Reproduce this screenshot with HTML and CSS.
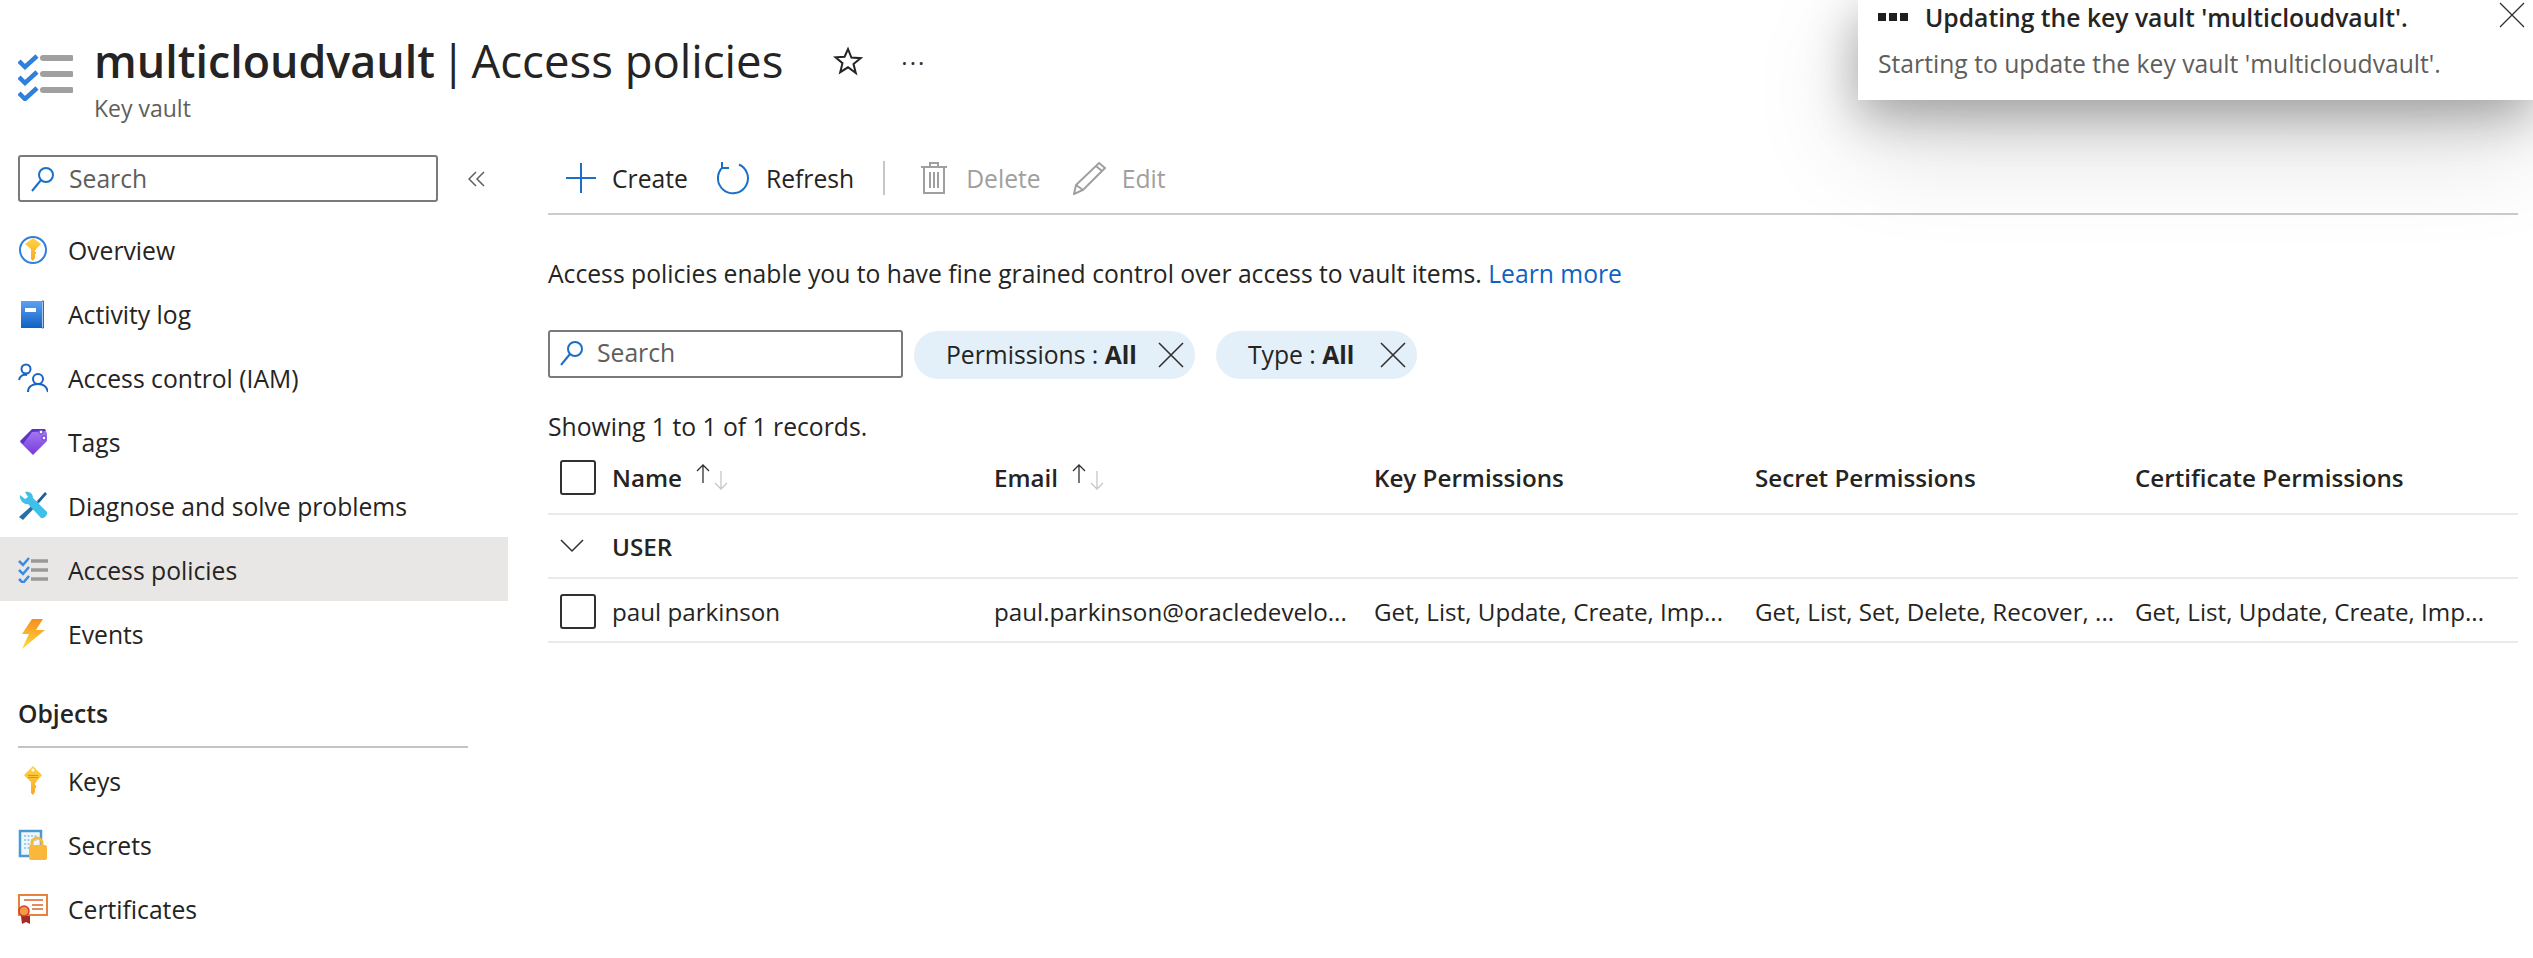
FILE: index.html
```html
<!DOCTYPE html>
<html lang="en">
<head>
	<meta charset="UTF-8">
	<title>multicloudvault | Access policies</title>
	<link rel="stylesheet" href="styles.css">
</head>
<body>
	<svg class="defs" width="0" height="0">
		<defs>
			<linearGradient id="blue" x1="0" y1="0" x2="0" y2="1"><stop offset="0" stop-color="#5ea0ef"/><stop offset="1" stop-color="#0f62c4"/></linearGradient>
			<linearGradient id="gold" x1="0" y1="0" x2="0" y2="1"><stop offset="0" stop-color="#fed342"/><stop offset="1" stop-color="#f9a825"/></linearGradient>
			<linearGradient id="purple" x1="0" y1="0" x2="0" y2="1"><stop offset="0" stop-color="#a67af4"/><stop offset="1" stop-color="#773adc"/></linearGradient>
			<linearGradient id="bolt" x1="0" y1="0" x2="0" y2="1"><stop offset="0" stop-color="#f78d1e"/><stop offset="1" stop-color="#fedc3d"/></linearGradient>
		</defs>
	</svg>

	<div class="head">
		<svg class="head-icon" width="55" height="48" viewBox="0 0 55 48">
			<path d="M1 8l6 6L19 3M1 24l6 6L19 19M1 40l6 6L19 35" fill="none" stroke="#2f7fdc" stroke-width="4.5"/>
			<path d="M25 5h28M25 21h28M25 37h28" fill="none" stroke="#a0a0a0" stroke-width="6" stroke-linecap="round"/>
		</svg>
		<div class="head-text">
			<h1 class="title"><b>multicloudvault</b><span class="title-bar"> | </span>Access policies</h1>
			<div class="subtitle">Key vault</div>
		</div>
		<svg class="star" width="30" height="30" viewBox="0 0 30 30">
			<path d="M15 3l3.4 8.6 9.1.6-7 5.9 2.3 9L15 21.300l-7.800 4.900 2.300-9-7-5.900 9.100-.6z" fill="none" stroke="#252423" stroke-width="2"/>
		</svg>
		<div class="more">···</div>
	</div>

	<div class="layout">
		<div class="side">
			<div class="side-top">
				<div class="search side-search">
					<svg width="24" height="26" viewBox="0 0 24 26"><circle cx="15" cy="9" r="7" fill="none" stroke="#1a6fc9" stroke-width="2"/><path d="M10 14L1 25" stroke="#1a6fc9" stroke-width="2"/></svg>
					<span>Search</span>
				</div>
				<svg class="collapse" width="18" height="16" viewBox="0 0 18 16"><path d="M8 1L1 8l7 7M16 1L9 8l7 7" fill="none" stroke="#605e5c" stroke-width="1.500"/></svg>
			</div>

			<ul class="nav">
				<li class="nav-item">
					<svg width="30" height="30" viewBox="0 0 30 30"><circle cx="15" cy="15" r="13" fill="#fff" stroke="#2f7fdc" stroke-width="2"/><path d="M15 3l8 6-5 5v1h-1v2h1v2h-1v4l-2 3-2-2V14L7 9z" fill="url(#gold)"/></svg>
					<span>Overview</span>
				</li>
				<li class="nav-item">
					<svg width="30" height="30" viewBox="0 0 30 30"><path d="M3 2h21v27H3z" fill="url(#blue)"/><path d="M24 2h1.500v27H24" fill="#a9c9ee" stroke="#1f6cc5"/><path d="M7 9h11v4H7z" fill="#fff"/></svg>
					<span>Activity log</span>
				</li>
				<li class="nav-item">
					<svg width="30" height="30" viewBox="0 0 30 30" fill="none" stroke="#1a63c6" stroke-width="2"><circle cx="8" cy="6" r="4.500"/><circle cx="20" cy="16" r="5"/><path d="M1 17c1-4 4-6 8-5M10 29c0-5 4-8 10-8s9 3 10 8"/></svg>
					<span>Access control (IAM)</span>
				</li>
				<li class="nav-item">
					<svg width="30" height="30" viewBox="0 0 30 30"><path d="M2 15L14 3h13l2 3v8L15 28z" fill="url(#purple)"/><path d="M2 14L14 2h13l1 2-14 1-9 12z" fill="#5b34c8"/><circle cx="23" cy="5" r="2" fill="#fff" stroke="#5b34c8"/><circle cx="26" cy="11" r="2" fill="#fff" stroke="#5b34c8"/></svg>
					<span>Tags</span>
				</li>
				<li class="nav-item">
					<svg width="30" height="30" viewBox="0 0 30 30"><path d="M27 1l2 2-8 9-2-2z" fill="#1d5f96"/><path d="M19 10l2 2L5 29l-4-3z" fill="#276fa8"/><path d="M2 4l5 4 3-2-3-5c4-1 8 1 8 6l14 14c1 3-3 7-6 6L10 13C6 14 1 9 2 4z" fill="#3fc0e8"/></svg>
					<span>Diagnose and solve problems</span>
				</li>
				<li class="nav-item active">
					<svg width="30" height="26" viewBox="0 0 30 26"><path d="M1 4l4 4 6-7M1 13l4 4 6-7M1 22l4 4 6-7" fill="none" stroke="#3b8ae4" stroke-width="2.500"/><path d="M13 4h17M13 13h17M13 22h17" stroke="#999" stroke-width="3.500"/></svg>
					<span>Access policies</span>
				</li>
				<li class="nav-item">
					<svg width="30" height="32" viewBox="0 0 30 32"><path d="M14 1h11l-7 11h9L4 31l7-15H4z" fill="url(#bolt)"/></svg>
					<span>Events</span>
				</li>
			</ul>

			<div class="group">Objects</div>

			<ul class="nav">
				<li class="nav-item">
					<svg width="30" height="30" viewBox="0 0 30 30"><path d="M15 0l9 9-6 7v1h-1v2h1v3h-1v4l-2 3-2-2V16L6 9z" fill="url(#gold)"/><circle cx="15" cy="4" r="1.500" fill="#fff"/><path d="M10 9.500h10M10 11.500h10" stroke="#e9892c"/></svg>
					<span>Keys</span>
				</li>
				<li class="nav-item">
					<svg width="30" height="32" viewBox="0 0 30 32"><path d="M2 2h21v25H2z" fill="#f0f7fc" stroke="#4a9ad2" stroke-width="2.500"/><path d="M6 7h13M6 11h13M6 15h9M6 19h7" stroke="#9fd0ee" stroke-width="2" stroke-dasharray="2 1.500"/><path d="M14 17v-3a5 5 0 0 1 10 0v3" fill="none" stroke="#fab83b" stroke-width="3"/><rect x="11" y="16" width="18" height="15" rx="2" fill="#fab83b"/></svg>
					<span>Secrets</span>
				</li>
				<li class="nav-item">
					<svg width="30" height="30" viewBox="0 0 30 30"><path d="M1 1h28v20H1z" fill="#fff" stroke="#e8823a" stroke-width="2"/><path d="M6 6h19M14 11h11M14 15h11" stroke="#d9662a" stroke-width="1.500"/><path d="M3 22h9v8l-4-2-4 2z" fill="#a52a22"/><circle cx="6" cy="17" r="5" fill="#f59b45" stroke="#cf3f30" stroke-width="1.500"/></svg>
					<span>Certificates</span>
				</li>
			</ul>
		</div>

		<div class="main">
			<div class="toolbar">
				<div class="tool tool-create">
					<svg width="32" height="30" viewBox="0 0 32 30"><path d="M16 0v30M1 15h30" stroke="#1a6fc9" stroke-width="2"/></svg>
					<span>Create</span>
				</div>
				<div class="tool tool-refresh">
					<svg width="34" height="34" viewBox="0 0 34 34" fill="none" stroke="#1a6fc9" stroke-width="2"><path d="M22 3.500A15 15 0 1 1 6 6"/><path d="M5 1v6h7"/></svg>
					<span>Refresh</span>
				</div>
				<div class="tool-sep"></div>
				<div class="tool tool-delete off">
					<svg width="26" height="32" viewBox="0 0 26 32" fill="none" stroke="#a19f9d" stroke-width="2"><path d="M0 5h26M9 5V1h8v4M3 5v26h20V5M9 10v16M13 10v16M17 10v16"/></svg>
					<span>Delete</span>
				</div>
				<div class="tool tool-edit off">
					<svg width="34" height="34" viewBox="0 0 34 34" fill="none" stroke="#a19f9d" stroke-width="2"><path d="M26 2l6 5L10 29l-9 4 2-9zM3 24l7 5M23 5l6 5"/></svg>
					<span>Edit</span>
				</div>
			</div>

			<p class="intro">Access policies enable you to have fine grained control over access to vault items. <a class="link" href="#qq">Learn more</a></p>

			<div class="filters">
				<div class="search main-search">
					<svg width="24" height="26" viewBox="0 0 24 26"><circle cx="15" cy="9" r="7" fill="none" stroke="#1a6fc9" stroke-width="2"/><path d="M10 14L1 25" stroke="#1a6fc9" stroke-width="2"/></svg>
					<span>Search</span>
				</div>
				<div class="pill pill-perm">
					<span>Permissions : <b>All</b></span>
					<svg width="26" height="26" viewBox="0 0 26 26"><path d="M1 1l24 24M25 1L1 25" stroke="#323130" stroke-width="1.600"/></svg>
				</div>
				<div class="pill pill-type">
					<span>Type : <b>All</b></span>
					<svg width="26" height="26" viewBox="0 0 26 26"><path d="M1 1l24 24M25 1L1 25" stroke="#323130" stroke-width="1.600"/></svg>
				</div>
			</div>

			<div class="count">Showing 1 to 1 of 1 records.</div>

			<div class="row row-head">
				<div class="cell-check"><i class="check"></i></div>
				<div class="cell">Name
					<svg class="sort" width="36" height="26" viewBox="0 0 36 26" fill="none"><path d="M9 19V1M3 7l6-6 6 6" stroke="#323130" stroke-width="1.300"/><path d="M27 7v18M21 19l6 6 6-6" stroke="#c8c6c4" stroke-width="1.300"/></svg>
				</div>
				<div class="cell">Email
					<svg class="sort" width="36" height="26" viewBox="0 0 36 26" fill="none"><path d="M9 19V1M3 7l6-6 6 6" stroke="#323130" stroke-width="1.300"/><path d="M27 7v18M21 19l6 6 6-6" stroke="#c8c6c4" stroke-width="1.300"/></svg>
				</div>
				<div class="cell">Key Permissions</div>
				<div class="cell">Secret Permissions</div>
				<div class="cell">Certificate Permissions</div>
			</div>
			<div class="row row-group">
				<div class="cell-check">
					<svg width="24" height="14" viewBox="0 0 24 14"><path d="M1 1l11 11L23 1" fill="none" stroke="#323130" stroke-width="1.500"/></svg>
				</div>
				<div class="cell">USER</div>
			</div>
			<div class="row row-data">
				<div class="cell-check"><i class="check"></i></div>
				<div class="cell">paul parkinson</div>
				<div class="cell">paul.parkinson@oracledevelo...</div>
				<div class="cell">Get, List, Update, Create, Imp...</div>
				<div class="cell">Get, List, Set, Delete, Recover, ...</div>
				<div class="cell">Get, List, Update, Create, Imp...</div>
			</div>
		</div>
	</div>

	<div class="toast">
		<div class="toast-title">
			<span class="dots"><i></i><i></i><i></i></span>
			<b>Updating the key vault 'multicloudvault'.</b>
		</div>
		<div class="toast-text">Starting to update the key vault 'multicloudvault'.</div>
		<svg class="toast-close" width="26" height="26" viewBox="0 0 26 26"><path d="M1 1l24 24M25 1L1 25" stroke="#323130" stroke-width="1.300"/></svg>
	</div>
</body>
</html>
```

FILE: styles.css
```css
*{
	margin: 0;
	padding: 0;
	list-style-type: none;
	box-sizing: border-box;
}
html,body{
	height: 958px;
	overflow: hidden;
}
body{
	position: relative;
	background: #fff;
	color: #252423;
	font-family: "Open Sans", "Noto Sans", sans-serif;
	font-size: 24.7px;
}
.defs{
	display: block;
	height: 0;
}
b{
	font-weight: 600;
}
.head{
	display: flex;
	height: 155px;
	padding: 30px 0 0 18px;
}
.head-icon{
	margin-top: 23px;
}
.head-text{
	margin-left: 21px;
}
.title{
	font-size: 45.500px;
	font-weight: 400;
	line-height: 60px;
	white-space: pre;
}
.title b{
	font-size: 44.800px;
}
.title-bar{
	word-spacing: -6px;
}
.subtitle{
	color: #605e5c;
	font-size: 23px;
	line-height: 34px;
}
.star{
	margin: 16px 0 0 50px;
}
.more{
	margin: 18px 0 0 38px;
	font-size: 24px;
	line-height: 30px;
	letter-spacing: 2px;
	color: #323130;
}
.layout{
	display: flex;
}
.side{
	flex: none;
	width: 508px;
}
.side-top{
	display: flex;
	align-items: center;
	height: 62px;
	padding-bottom: 15px;
	padding-left: 18px;
}
.search{
	display: flex;
	align-items: center;
	gap: 14px;
	height: 47px;
	padding-left: 11px;
	border: 2px solid #7a7a7a;
	border-radius: 3px;
	color: #605e5c;
}
.side-search{
	width: 420px;
}
.collapse{
	margin-left: 30px;
}
.nav-item{
	display: flex;
	align-items: center;
	gap: 20px;
	height: 64px;
	padding: 2px 0 0 18px;
	white-space: nowrap;
}
.nav-item svg{
	flex: none;
}
.active{
	background: #e8e7e6;
}
.group{
	display: flex;
	align-items: flex-end;
	width: 450px;
	height: 83px;
	margin-left: 18px;
	padding-bottom: 16px;
	border-bottom: 2px solid #c4c4c4;
	font-weight: 600;
}
.main{
	flex: 1;
	padding: 0 15px 0 40px;
}
.toolbar{
	display: flex;
	align-items: center;
	height: 60px;
	padding-bottom: 12px;
	border-bottom: 2px solid #ccc;
}
.tool{
	display: flex;
	align-items: center;
	white-space: nowrap;
}
.tool-create{
	gap: 15px;
	margin-left: 17px;
}
.tool-refresh{
	gap: 15px;
	margin-left: 29px;
}
.tool-sep{
	width: 2px;
	height: 34px;
	margin: 0 36px 0 29px;
	background: #c8c6c4;
}
.tool-delete{
	gap: 19px;
}
.tool-edit{
	gap: 15px;
	margin-left: 32px;
}
.off{
	color: #a19f9d;
}
.intro{
	height: 113px;
	padding-top: 41px;
	line-height: 36px;
	white-space: nowrap;
}
.link{
	color: #0f62c4;
	text-decoration: none;
}
.filters{
	display: flex;
	align-items: center;
	gap: 11px;
}
.main-search{
	width: 355px;
	height: 48px;
	padding: 0 0 2px 10px;
	gap: 13px;
}
.pill{
	display: flex;
	align-items: center;
	justify-content: space-between;
	height: 48px;
	margin-top: 3px;
	padding: 0 11px 0 32px;
	border-radius: 24px;
	background: #e3eff9;
	white-space: nowrap;
}
.pill span{
	padding-bottom: 2px;
}
.pill b{
	font-weight: 700;
}
.pill-perm{
	width: 281px;
}
.pill-type{
	width: 201px;
	margin-left: 10px;
}
.count{
	margin-top: 26px;
	line-height: 44px;
}
.row{
	display: grid;
	grid-template-columns: 64px 382px 380px 381px 380px 1fr;
	align-items: center;
	height: 64px;
	border-bottom: 2px solid #edebe9;
	font-size: 24.200px;
	white-space: nowrap;
}
.row-head,.row-group{
	font-weight: 600;
}
.row-head{
	height: 66px;
	padding-bottom: 8px;
}
.row-data{
	padding-top: 2px;
}
.cell-check{
	display: flex;
	align-items: center;
	padding-left: 12px;
}
.cell{
	display: flex;
	align-items: center;
	gap: 12px;
	white-space: pre;
}
.row-head .cell{
	white-space: normal;
}
.check{
	display: block;
	width: 36px;
	height: 35px;
	border: 2px solid #323130;
	border-radius: 3px;
}
.toast{
	position: absolute;
	top: 0;
	right: 0;
	width: 675px;
	height: 100px;
	background: #fff;
	box-shadow: 0 14px 50px rgba(0,0,0,.32), 0 40px 110px rgba(0,0,0,.16);
}
.toast-title{
	display: flex;
	align-items: center;
	gap: 17px;
	height: 34px;
	padding-left: 20px;
}
.dots{
	display: flex;
	gap: 3px;
}
.dots i{
	display: block;
	width: 8px;
	height: 8px;
	background: #201f1e;
}
.toast-text{
	margin-top: 13px;
	padding-left: 20px;
	color: #605e5c;
	line-height: 34px;
}
.toast-close{
	position: absolute;
	top: 2px;
	right: 8px;
}
```
